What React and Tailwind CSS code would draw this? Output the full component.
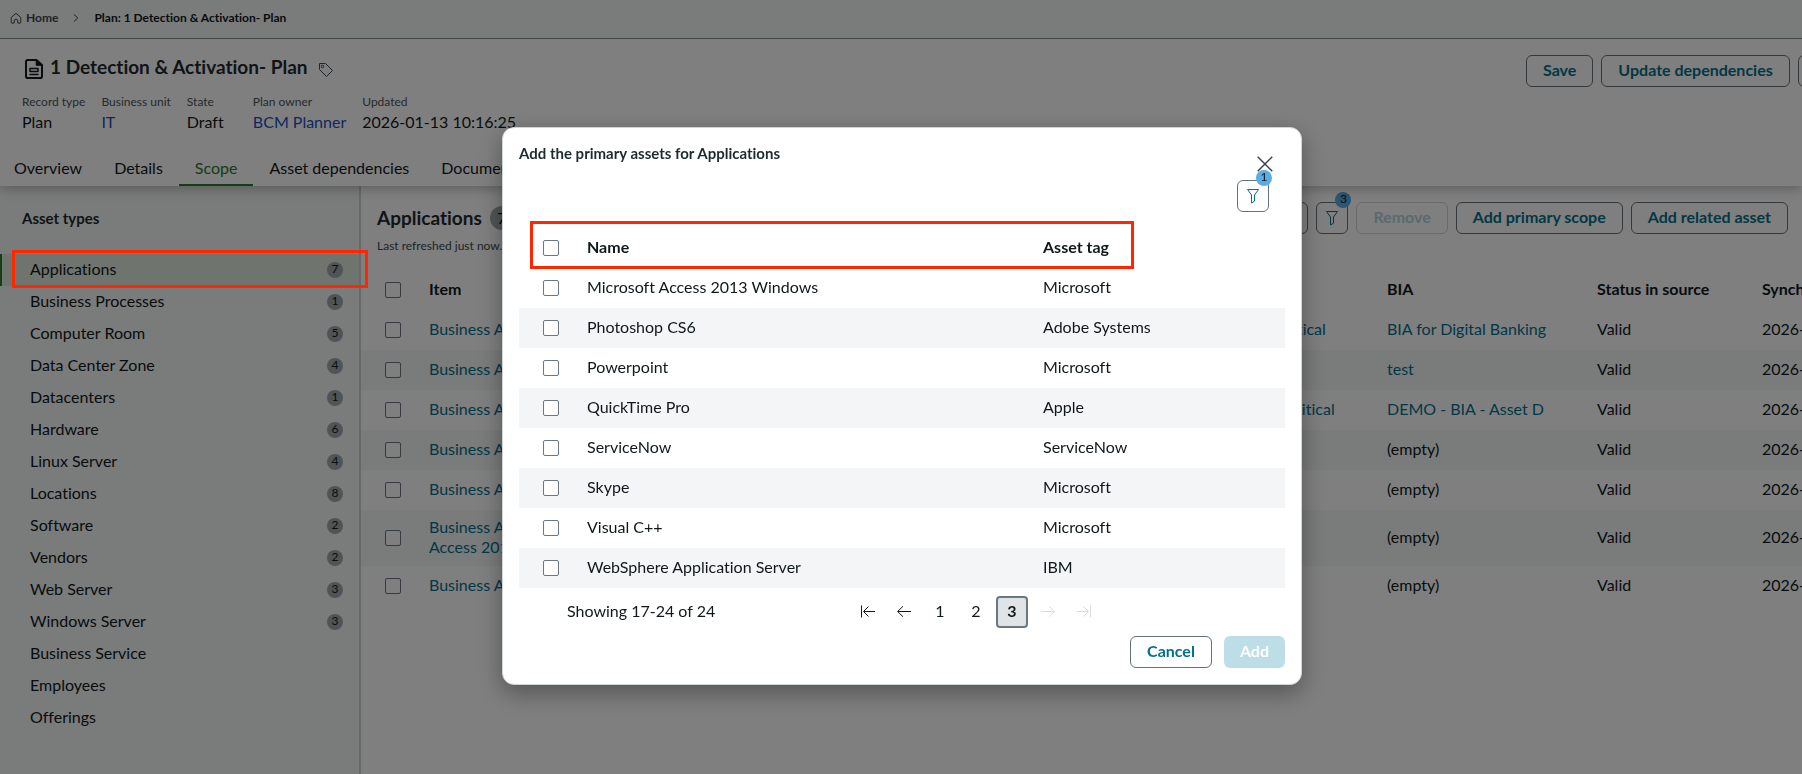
const assetTypes = [
  ["Applications", 7], ["Business Processes", 1], ["Computer Room", 5], ["Data Center Zone", 4],
  ["Datacenters", 1], ["Hardware", 6], ["Linux Server", 4], ["Locations", 8], ["Software", 2],
  ["Vendors", 2], ["Web Server", 3], ["Windows Server", 3], ["Business Service", null],
  ["Employees", null], ["Offerings", null],
];

const scopeRows = [
  { item: "Business Application: Banking", crit: "3 - less critical", bia: "BIA for Digital Banking" },
  { item: "Business Application: Portal", bia: "test" },
  { item: "Business Application: Payroll", crit: "1 - most critical", bia: "DEMO - BIA - Asset D" },
  { item: "Business Application: Skype" },
  { item: "Business Application: Visio" },
  { item: "Business Application: Microsoft Access 2013 Windows" },
  { item: "Business Application: Outlook" },
];

const modalRows = [
  ["Microsoft Access 2013 Windows", "Microsoft"],
  ["Photoshop CS6", "Adobe Systems"],
  ["Powerpoint", "Microsoft"],
  ["QuickTime Pro", "Apple"],
  ["ServiceNow", "ServiceNow"],
  ["Skype", "Microsoft"],
  ["Visual C++", "Microsoft"],
  ["WebSphere Application Server", "IBM"],
];

const facts = [
  ["Record type", "Plan"],
  ["Business unit", "IT", true],
  ["State", "Draft"],
  ["Plan owner", "BCM Planner", true],
  ["Updated", "2026-01-13 10:16:25"],
];

const tabs = ["Overview", "Details", "Scope", "Asset dependencies", "Documents"];

function Svg({ size = 16, children, className = "" }) {
  return (
    <svg width={size} height={size} viewBox={`0 0 ${size} ${size}`} fill="none" stroke="currentColor" aria-hidden="true" className={`shrink-0 ${className}`}>
      {children}
    </svg>
  );
}

const FunnelIcon = () => (
  <Svg><path d="M2.5 1.5h11L9.5 7v6.2L6.5 15V7z" strokeLinejoin="round" /></Svg>
);

function Check({ label }) {
  return (
    <input type="checkbox" aria-label={label} className="block size-4 appearance-none rounded-xs border border-[#6b7780] bg-white" />
  );
}

function Button({ children, className = "", ...rest }) {
  return (
    <button type="button" className={`h-8 shrink-0 rounded-md border border-[#66727a] px-4 pb-0.5 font-bold whitespace-nowrap text-[#03708c] ${className}`} {...rest}>
      {children}
    </button>
  );
}

function FilterButton({ count }) {
  return (
    <button type="button" aria-label={`Filter, ${count} applied`} className="relative flex size-8 shrink-0 items-center justify-center rounded-md border border-[#66727a] text-[#03708c]">
      <FunnelIcon />
      <span className="absolute -top-[11px] -right-1 flex size-4 items-center justify-center rounded-full bg-[#5aace2] pb-0.5 text-xs leading-none text-[#10181b]">
        {count}
      </span>
    </button>
  );
}

function Header() {
  return (
    <header className="relative z-10 bg-white shadow-[0_2px_12px_rgba(0,0,0,0.3)]">
      <nav aria-label="Breadcrumb" className="flex h-[39px] items-center border-b border-[#7f8f93] bg-[#f4f7f6] pb-0.5 pl-2.5 text-xs font-bold">
        <a href="#home" className="flex items-center gap-1 text-[#3c484f]">
          <Svg size={12}><path d="M1.2 5.4 6 1.3l4.8 4.1v5a.7.7 0 0 1-.7.7H7.8V9a1.8 1.8 0 0 0-3.6 0v2.1H1.9a.7.7 0 0 1-.7-.7z" strokeLinejoin="round" /></Svg>
          Home
        </a>
        <Svg size={8} className="mx-3.5 text-[#3c484f]"><path d="M2 .5 5.8 4 2 7.5" strokeLinecap="round" /></Svg>
        <span className="text-[#10181b]">Plan: 1 Detection &amp; Activation- Plan</span>
      </nav>

      <div className="flex items-start justify-between">
        <div className="pt-4 pl-[22px]">
          <div className="flex items-center">
            <Svg size={24} className="text-[#10181b]">
              <path d="M6 5h8.5L20 10v11.2a1.8 1.8 0 0 1-1.8 1.8H5.8A1.8 1.8 0 0 1 4 21.2V6.8A1.8 1.8 0 0 1 5.8 5z" strokeWidth="2" strokeLinejoin="round" />
              <path d="M14.2 5v5.3H20z" fill="currentColor" strokeWidth="1" />
              <path d="M8 13.5h8v3H8zM8 19.5h8" strokeWidth="1.5" strokeLinejoin="round" strokeLinecap="round" />
            </Svg>
            <h1 className="ml-1 text-[19px] leading-6 font-bold text-[#1e2a2f]">1 Detection &amp; Activation- Plan</h1>
            <button type="button" aria-label="Tags" className="mt-1.5 ml-2.5 text-[#3c484f]">
              <Svg><path d="M1.5 1.5h6l7 7-6 6-7-7z" strokeLinejoin="round" /><circle cx="4.5" cy="4.5" r="1.3" /></Svg>
            </button>
          </div>
          <dl className="mt-[13px] flex gap-4">
            {facts.map(([label, value, link]) => (
              <div key={label} className="min-w-[50px]">
                <dt className="text-xs leading-5 text-[#4a555b]">{label}</dt>
                <dd className="leading-5 text-[#10181b]">
                  {link ? <a href="#record" className="text-[#1d4fbf]">{value}</a> : value}
                </dd>
              </div>
            ))}
          </dl>
        </div>
        <div className="flex w-[276px] shrink-0 gap-2 overflow-hidden pt-4">
          <Button>Save</Button>
          <Button>Update dependencies</Button>
          <Button>Export</Button>
        </div>
      </div>

      <nav aria-label="Record sections" className="mt-6 flex">
        {tabs.map((tab) => (
          <a
            key={tab}
            href="#tab"
            className={`border-b-2 px-4 pb-1 leading-6 whitespace-nowrap first:pl-3.5 ${tab === "Scope" ? "border-[#2c7a2a] text-[#2c7a2a]" : "border-transparent text-[#10181b]"}`}
          >
            {tab}
          </a>
        ))}
      </nav>
    </header>
  );
}

function Sidebar() {
  return (
    <aside className="w-[361px] shrink-0 border-r-2 border-[#d0d4d5] bg-[#f4f7f6]">
      <h2 className="pt-5 pb-6 pl-[22px] text-[15px] leading-6 font-bold text-[#1e2a2f]">Asset types</h2>
      <ul>
        {assetTypes.map(([name, count], i) => (
          <li key={name}>
            <a href="#asset" className={`flex h-8 items-center justify-between border-l-2 pr-4 pl-7 text-[#10181b] ${i === 0 ? "border-[#2c7a2a] bg-[#dfe9dc]" : "border-transparent"}`}>
              <span className="pb-0.5">{name}</span>
              {count && (
                <span className="flex size-4 items-center justify-center rounded-full bg-[#a3a9ac] pb-0.5 text-xs leading-none">{count}</span>
              )}
            </a>
          </li>
        ))}
      </ul>
    </aside>
  );
}

function ScopePanel() {
  return (
    <main className="min-w-0 flex-1 overflow-hidden">
      <div className="flex justify-between pt-4 pr-3.5 pl-4">
        <div>
          <div className="flex items-center gap-2">
            <h2 className="text-[19px] leading-8 font-bold text-[#1e2a2f]">Applications</h2>
            <span className="flex size-6 items-center justify-center rounded-full bg-[#a3a9ac]">7</span>
          </div>
          <p className="text-xs leading-6 text-[#3c484f]">Last refreshed just now.</p>
        </div>
        <div className="flex gap-2">
          <Button aria-label="Refresh" className="w-8" />
          <FilterButton count={3} />
          <Button disabled className="opacity-30">Remove</Button>
          <Button>Add primary scope</Button>
          <Button>Add related asset</Button>
        </div>
      </div>
      <table className="mt-3 w-[1660px] table-fixed text-left leading-5 text-[#10181b]">
        <colgroup>
          <col className="w-[52px]" />
          <col className="w-[400px]" />
          <col className="w-[397px]" />
          <col className="w-[161px]" />
          <col className="w-[210px]" />
          <col className="w-[165px]" />
          <col />
        </colgroup>
        <thead>
          <tr className="h-10">
            <th className="pl-6"><Check label="Select all items" /></th>
            <th className="px-4 pb-0.5">Item</th>
            <th className="px-4 pb-0.5">Type</th>
            <th className="px-4 pb-0.5">Criticality</th>
            <th className="px-4 pb-0.5">BIA</th>
            <th className="px-4 pb-0.5">Status in source</th>
            <th className="px-4 pb-0.5">Synchronized</th>
          </tr>
        </thead>
        <tbody>
          {scopeRows.map((row) => (
            <tr key={row.item} className="h-10 even:bg-[#f4f7f6]">
              <td className="pl-6"><Check label={row.item} /></td>
              <td className="px-4 pt-[7px] pb-[9px]"><a href="#item" className="block max-w-64 text-[#03708c]">{row.item}</a></td>
              <td className="px-4 pb-0.5">Application</td>
              <td className="px-4 pb-0.5 whitespace-nowrap">{row.crit && <a href="#crit" className="text-[#03708c]">{row.crit}</a>}</td>
              <td className="px-4 pb-0.5">{row.bia ? <a href="#bia" className="text-[#03708c]">{row.bia}</a> : "(empty)"}</td>
              <td className="px-4 pb-0.5">Valid</td>
              <td className="px-4 pb-0.5">2026-01-13</td>
            </tr>
          ))}
        </tbody>
      </table>
    </main>
  );
}

const ArrowLeft = () => <Svg><path d="M15 8.5H1.8M7 3.3 1.6 8.500 7 13.700" /></Svg>;
const ArrowRight = () => <Svg><path d="M1 8.5h13.2M9 3.300 14.400 8.500 9 13.700" /></Svg>;
const ArrowFirst = () => <Svg><path d="M1.500 2.500v12M15 8.500H4M8.500 3.500l-5 5 5 5" /></Svg>;
const ArrowLast = () => <Svg><path d="M14.500 2.500v12M1 8.500h11M7.500 3.500l5 5-5 5" /></Svg>;

function PageButton({ children, active, ...rest }) {
  return (
    <button
      type="button"
      className={`flex size-8 items-center justify-center rounded-sm pb-0.5 text-[#10181b] disabled:text-[#dadddf] ${active ? "border-2 border-[#6b7780] bg-[#e0e4e7] font-bold" : ""}`}
      {...rest}
    >
      {children}
    </button>
  );
}

function AddAssetsDialog() {
  return (
    <section role="dialog" aria-modal="true" aria-labelledby="dialog-title" className="relative w-[800px] rounded-xl border border-[#cfd4d6] bg-white p-4 text-[#10181b] shadow-[0_8px_24px_rgba(0,0,0,0.35)]">
      <div className="flex h-9 items-start justify-between">
        <h2 id="dialog-title" className="text-[15px] leading-[18px] font-bold text-[#1e2a2f]">Add the primary assets for Applications</h2>
        <button type="button" aria-label="Close" className="mt-3 mr-3 text-[#37444a]">
          <Svg><path d="m.7.7 14.6 14.6M15.3.7.7 15.3" strokeWidth="1.5" /></Svg>
        </button>
      </div>
      <div className="flex justify-end pr-4"><FilterButton count={1} /></div>

      <table className="mt-4 w-full table-fixed text-left leading-5">
        <colgroup>
          <col className="w-[52px]" />
          <col className="w-[456px]" />
          <col />
        </colgroup>
        <thead>
          <tr className="h-10">
            <th className="pl-6"><Check label="Select all assets" /></th>
            <th className="px-4 pb-0.5">Name</th>
            <th className="px-4 pb-0.5">Asset tag</th>
          </tr>
        </thead>
        <tbody>
          {modalRows.map(([name, tag]) => (
            <tr key={name} className="h-10 even:bg-[#f3f5f7]">
              <td className="pl-6"><Check label={name} /></td>
              <td className="px-4 pb-0.5">{name}</td>
              <td className="px-4 pb-0.5">{tag}</td>
            </tr>
          ))}
        </tbody>
      </table>

      <div className="flex items-center pt-2 pl-12">
        <p className="w-[285px] shrink-0 pb-0.5">Showing 17-24 of 24</p>
        <nav aria-label="Pagination" className="flex gap-1">
          <PageButton aria-label="First page"><ArrowFirst /></PageButton>
          <PageButton aria-label="Previous page"><ArrowLeft /></PageButton>
          <PageButton>1</PageButton>
          <PageButton>2</PageButton>
          <PageButton active aria-current="page">3</PageButton>
          <PageButton disabled aria-label="Next page"><ArrowRight /></PageButton>
          <PageButton disabled aria-label="Last page"><ArrowLast /></PageButton>
        </nav>
      </div>
      <div className="mt-2 flex justify-end gap-3">
        <Button>Cancel</Button>
        <button type="button" disabled className="h-8 rounded-md bg-[#bedee7] px-4 pb-0.5 font-bold text-white">Add</button>
      </div>
      <div className="pointer-events-none absolute top-[93px] left-[27px] h-12 w-[604px] border-3 border-[#ff2600]" />
    </section>
  );
}

export default function App() {
  return (
    <div className="relative flex h-screen flex-col overflow-hidden bg-white font-['Lato',sans-serif] text-base [font-variant-ligatures:no-common-ligatures]">
      <Header />
      <div className="flex flex-1">
        <Sidebar />
        <ScopePanel />
      </div>
      <div className="fixed inset-0 z-20 flex items-start justify-center bg-black/50 pt-[127px] pl-0.5">
        <AddAssetsDialog />
      </div>
      <div className="pointer-events-none absolute top-[250px] left-3 z-20 h-[38px] w-[356px] border-3 border-[#ff2600]" />
    </div>
  );
}
